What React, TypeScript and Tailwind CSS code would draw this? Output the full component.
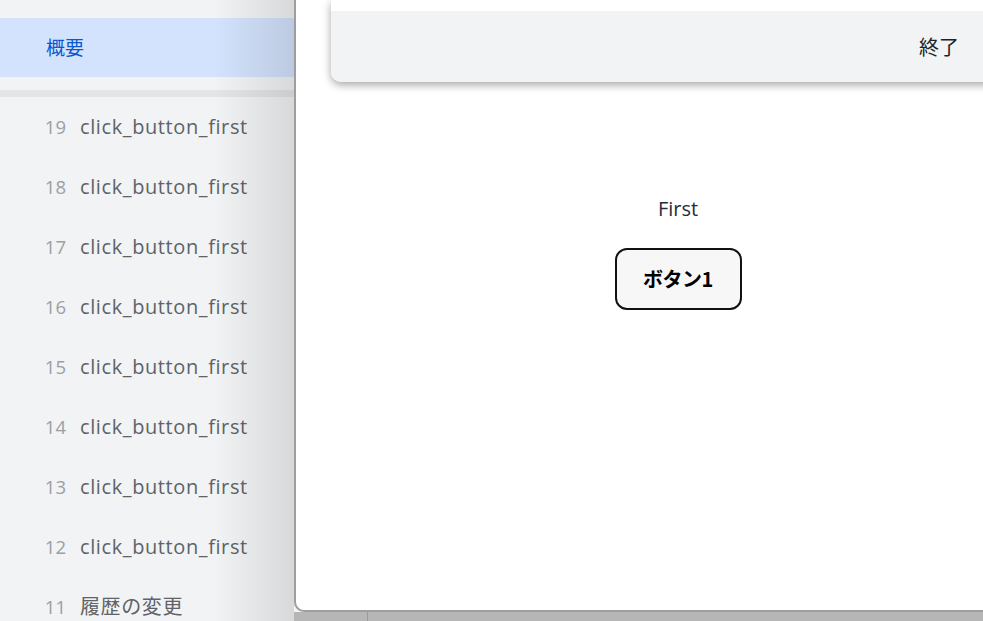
import React from "react";

const rows = [
  { n: "19", t: "click_button_first" },
  { n: "18", t: "click_button_first" },
  { n: "17", t: "click_button_first" },
  { n: "16", t: "click_button_first" },
  { n: "15", t: "click_button_first" },
  { n: "14", t: "click_button_first" },
  { n: "13", t: "click_button_first" },
  { n: "12", t: "click_button_first" },
  { n: "11", t: "履歴の変更" },
];

export default function App() {
  return (
    <div className="w-[983px] h-[621px] overflow-hidden flex bg-[#f1f3f4] font-['Open_Sans','Noto_Sans_CJK_JP',sans-serif]">
      <div className="w-[294px] shrink-0 relative bg-[#f1f3f4]">
        <div className="h-[18px]" />
        <div className="h-[59px] bg-[#d3e3fd] flex items-center pl-[46px] text-[19px] text-[#0b57d0] font-['Noto_Sans_CJK_JP',sans-serif]">
          概要
        </div>
        <div className="h-[13px]" />
        <div className="h-[7px] bg-[#e3e5e8]" />
        {rows.map((r) => (
          <div key={r.n} className="h-[60px] flex items-center">
            <span className="w-[66px] text-right text-[18.5px] text-[#9aa0a6]">{r.n}</span>
            <span className="ml-[14px] text-[20px] tracking-[0.6px] text-[#5f6368] font-['Open_Sans','Noto_Sans_CJK_JP',sans-serif]">{r.t}</span>
          </div>
        ))}
        <div className="absolute inset-y-0 right-0 w-[80px] bg-gradient-to-r from-transparent to-[rgba(0,0,0,0.11)] pointer-events-none" />
      </div>
      <div className="flex flex-col shrink-0">
        <div className="w-[766px] h-[612px] bg-white border-l-2 border-b-2 border-[#9e9e9e] rounded-bl-[10px] relative">
          <div className="ml-[35px] h-[82px] bg-white rounded-bl-[10px] shadow-[0_3px_8px_rgba(0,0,0,0.35)] flex flex-col">
            <div className="h-[11px]" />
            <div className="flex-1 bg-[#f1f3f4] rounded-bl-[10px] flex items-center">
              <span className="ml-[588px] text-[20px] text-[#202124] font-['Noto_Sans_CJK_JP',sans-serif]">終了</span>
            </div>
          </div>
          <div className="flex flex-col items-center pt-[112px]">
            <div className="text-[20px] text-[#1f2d3d] font-['Open_Sans',sans-serif] leading-[30px]">First</div>
            <div className="mt-[24px] w-[127px] h-[62px] border-2 border-[#111] rounded-[12px] bg-[#f7f7f7] flex items-center justify-center text-[20px] font-bold text-black font-['Noto_Sans_CJK_JP',sans-serif] tracking-[-0.5px]">
              ボタン1
            </div>
          </div>
        </div>
        <div className="h-[9px] flex bg-[#b6b6b6]">
          <div className="w-[74px] border-r border-[#9a9a9a]" />
        </div>
      </div>
    </div>
  );
}
